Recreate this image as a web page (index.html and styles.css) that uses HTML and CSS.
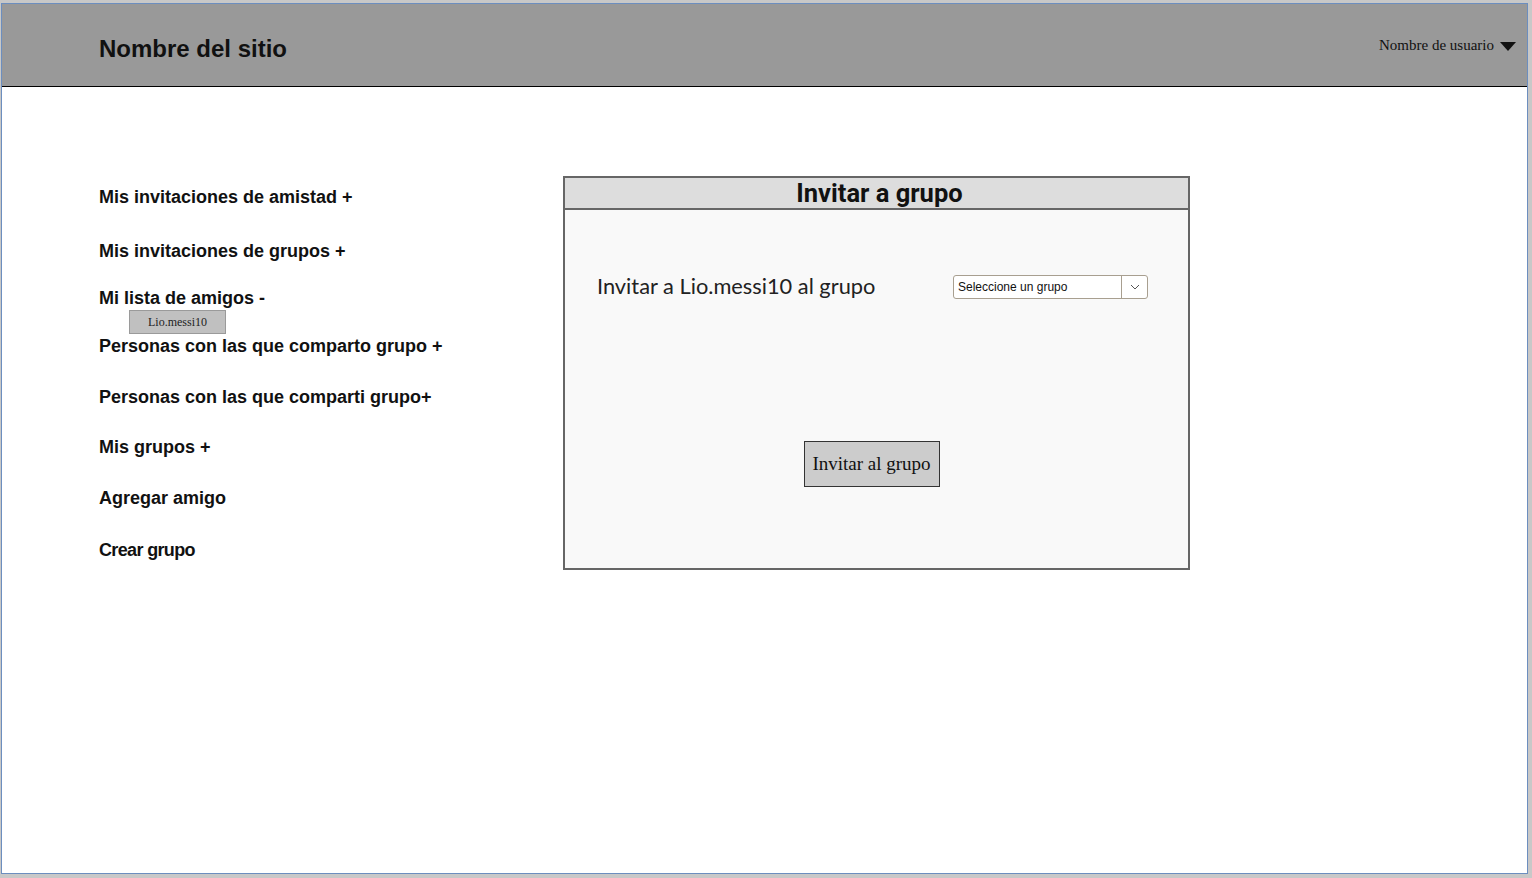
FILE: index.html
```html
<!DOCTYPE html>
<html>
<head>
<meta charset="utf-8">
<link rel="stylesheet" href="styles.css">
</head>
<body>
<div class="frame">
  <header class="topbar">
    <div class="site-name">Nombre del sitio</div>
    <div class="user">Nombre de usuario <span class="caret"></span></div>
  </header>
  <main class="content">
    <nav class="menu">
      <div class="item i1">Mis invitaciones de amistad +</div>
      <div class="item i2">Mis invitaciones de grupos +</div>
      <div class="item i3">Mi lista de amigos -</div>
      <div class="friend">Lio.messi10</div>
      <div class="item i4">Personas con las que comparto grupo +</div>
      <div class="item i5">Personas con las que comparti grupo+</div>
      <div class="item i6">Mis grupos +</div>
      <div class="item i7">Agregar amigo</div>
      <div class="item i8">Crear grupo</div>
    </nav>
    <section class="panel">
      <div class="panel-head">Invitar a grupo</div>
      <div class="panel-body">
        <div class="row">
          <div class="label">Invitar a Lio.messi10 al grupo</div>
          <div class="select">
            <span class="select-text">Seleccione un grupo</span>
            <span class="select-arrow"><svg width="10" height="6" viewBox="0 0 10 6"><path d="M1 1 L5 5 L9 1" fill="none" stroke="#555" stroke-width="1"/></svg></span>
          </div>
        </div>
        <div class="btn-row">
          <div class="btn">Invitar al grupo</div>
        </div>
      </div>
    </section>
  </main>
</div>
</body>
</html>
```

FILE: styles.css
```css
html, body {
  margin: 0;
  padding: 0;
}
body {
  background: #c8c8c8;
  width: 1532px;
  height: 878px;
  overflow: hidden;
  padding-top: 3px;
  padding-left: 1px;
  box-sizing: border-box;
}
.frame {
  width: 1527px;
  height: 871px;
  box-sizing: border-box;
  border: 1px solid #6c8ebf;
  background: #ffffff;
  display: flex;
  flex-direction: column;
}
.topbar {
  height: 83px;
  box-sizing: border-box;
  background: #999999;
  border-bottom: 1px solid #000;
  display: flex;
  align-items: center;
  justify-content: space-between;
  padding-left: 97px;
  padding-right: 11px;
}
.site-name {
  font-family: "Liberation Sans", Arial, sans-serif;
  font-weight: bold;
  font-size: 24px;
  color: #111;
  margin-top: 8px;
}
.user {
  font-family: "Liberation Serif", "Times New Roman", serif;
  font-size: 15px;
  color: #111;
  display: flex;
  align-items: center;
  margin-top: 0px;
}
.caret {
  display: inline-block;
  width: 0;
  height: 0;
  border-left: 8px solid transparent;
  border-right: 8px solid transparent;
  border-top: 9px solid #111;
  margin-left: 6px;
  margin-top: 3px;
}
.content {
  display: flex;
  padding-left: 97px;
  padding-top: 89px;
}
.menu {
  width: 464px;
  flex: none;
  display: flex;
  flex-direction: column;
  font-family: "Liberation Sans", Arial, sans-serif;
  font-weight: bold;
  font-size: 18px;
  color: #111;
}
.item {
  line-height: 22px;
}
.i1 { margin-top: 10px; }
.i2 { margin-top: 32px; }
.i3 { margin-top: 25px; }
.friend {
  margin-left: 30px;
  margin-top: 1px;
  width: 97px;
  height: 24px;
  box-sizing: border-box;
  background: #c0c0c0;
  border: 1px solid #9a9a9a;
  font-family: "Liberation Serif", "Times New Roman", serif;
  font-weight: normal;
  font-size: 12px;
  display: flex;
  align-items: center;
  justify-content: center;
  color: #222;
}
.i4 { margin-top: 1px; }
.i5 { margin-top: 29px; }
.i6 { margin-top: 28px; }
.i7 { margin-top: 29px; }
.i8 { margin-top: 30px; letter-spacing: -0.65px; }
.panel {
  width: 627px;
  height: 394px;
  flex: none;
  box-sizing: border-box;
  border: 2px solid #666;
  background: #f9f9f9;
  display: flex;
  flex-direction: column;
}
.panel-head {
  height: 32px;
  box-sizing: border-box;
  background: #dddddd;
  border-bottom: 2px solid #666;
  font-family: Roboto, "Liberation Sans", sans-serif;
  font-weight: bold;
  font-size: 25.5px;
  text-align: center;
  line-height: 30px;
  color: #111;
  padding-left: 6px;
}
.panel-body {
  display: flex;
  flex-direction: column;
  padding: 64px 40px 0 32px;
}
.row {
  display: flex;
  justify-content: space-between;
  align-items: center;
}
.label {
  font-family: Lato, sans-serif;
  font-size: 21.8px;
  color: #222;
  margin-top: -2px;
}
.select {
  width: 195px;
  height: 24px;
  box-sizing: border-box;
  border: 1px solid #a89f90;
  border-radius: 3px;
  background: #fff;
  display: flex;
  align-items: center;
  font-family: "Liberation Sans", Arial, sans-serif;
  font-size: 12px;
  color: #111;
}
.select-text {
  flex: 1;
  padding-left: 4px;
}
.select-arrow {
  width: 25px;
  height: 100%;
  border-left: 1px solid #a89f90;
  display: flex;
  align-items: center;
  justify-content: center;
}
.btn-row {
  display: flex;
  justify-content: center;
  margin-top: 142px;
  padding-right: 2px;
}
.btn {
  width: 136px;
  height: 46px;
  box-sizing: border-box;
  background: #cccccc;
  border: 1px solid #333;
  font-family: "Liberation Serif", "Times New Roman", serif;
  font-size: 19px;
  color: #111;
  display: flex;
  align-items: center;
  justify-content: center;
}
```
